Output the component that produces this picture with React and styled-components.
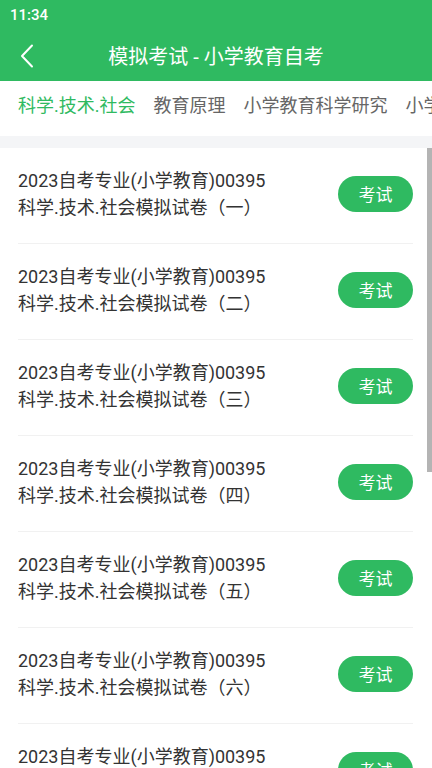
import styled, { createGlobalStyle } from 'styled-components';

const GREEN = '#2fba61';

const GlobalStyle = createGlobalStyle`
  html, body {
    margin: 0;
    padding: 0;
    height: 768px;
    overflow: hidden;
    background: #fff;
    font-family: Roboto, "Noto Sans CJK SC", "Noto Sans", sans-serif;
  }
`;

const Page = styled.div`
  width: 432px;
  height: 768px;
  display: flex;
  flex-direction: column;
  position: relative;
  overflow: hidden;
  & > * {
    flex-shrink: 0;
  }
`;

const StatusBar = styled.div`
  height: 30px;
  background: ${GREEN};
  display: flex;
  align-items: center;
  padding: 0 10px;
  color: #fff;
  font-family: Roboto, sans-serif;
  font-weight: 500;
  font-size: 15px;
`;

const NavBar = styled.div`
  height: 51px;
  background: ${GREEN};
  display: grid;
  grid-template-columns: 52px 1fr 52px;
  align-items: center;
`;

const BackButton = styled.div`
  display: flex;
  align-items: center;
  justify-content: center;
  padding-left: 2px;
`;

const Title = styled.div`
  text-align: center;
  color: #fff;
  font-size: 20px;
  font-family: Roboto, "Noto Sans CJK SC", sans-serif;
`;

const TabBar = styled.div`
  height: 55px;
  display: flex;
  align-items: flex-start;
  gap: 18px;
  padding: 0 18px;
  white-space: nowrap;
  overflow: hidden;
`;

const Tab = styled.div`
  position: relative;
  flex: 0 0 auto;
  font-size: 18px;
  line-height: 24px;
  padding-top: 13px;
  height: 42px;
  color: ${(p) => (p.$active ? GREEN : '#666')};
`;

const Indicator = styled.div`
  position: absolute;
  left: 50%;
  bottom: -5px;
  width: 22px;
  height: 4px;
  margin-left: -11px;
  border-radius: 2px;
  background: ${GREEN};
`;

const Band = styled.div`
  height: 12px;
  background: #f4f5f7;
`;

const List = styled.div`
  display: flex;
  flex-direction: column;
  padding: 0 19px 0 18px;
`;

const Item = styled.div`
  box-sizing: border-box;
  height: 96px;
  padding-bottom: 4px;
  flex: 0 0 auto;
  display: flex;
  align-items: center;
  justify-content: space-between;
  border-bottom: 1px solid #f1f1f1;
`;

const ItemText = styled.div`
  font-size: 18px;
  line-height: 27px;
  color: #333;
`;

const ExamButton = styled.div`
  width: 75px;
  height: 36px;
  border-radius: 18px;
  background: ${GREEN};
  color: #fff;
  font-size: 17px;
  display: flex;
  align-items: center;
  justify-content: center;
`;

const ScrollThumb = styled.div`
  position: absolute;
  right: 0;
  top: 148px;
  width: 5px;
  height: 324px;
  background: #b4b4b4;
`;

const tabs = ['科学.技术.社会', '教育原理', '小学教育科学研究', '小学教育心理学'];
const nums = ['一', '二', '三', '四', '五', '六', '七'];

const App = () => {
  return (
    <Page>
      <GlobalStyle />
      <StatusBar>11:34</StatusBar>
      <NavBar>
        <BackButton>
          <svg width="14" height="24" viewBox="0 0 14 24" fill="none">
            <path d="M12 1.5 L2 12 L12 22.5" stroke="#fff" strokeWidth="2" strokeLinecap="round" strokeLinejoin="round" />
          </svg>
        </BackButton>
        <Title>模拟考试 - 小学教育自考</Title>
        <div />
      </NavBar>
      <TabBar>
        {tabs.map((t, i) => (
          <Tab key={t} $active={i === 0}>
            {t}
            {i === 0 && <Indicator />}
          </Tab>
        ))}
      </TabBar>
      <Band />
      <List>
        {nums.map((n) => (
          <Item key={n}>
            <ItemText>
              2023自考专业(小学教育)00395
              <br />
              科学.技术.社会模拟试卷（{n}）
            </ItemText>
            <ExamButton>考试</ExamButton>
          </Item>
        ))}
      </List>
      <ScrollThumb />
    </Page>
  );
};

export default App;
